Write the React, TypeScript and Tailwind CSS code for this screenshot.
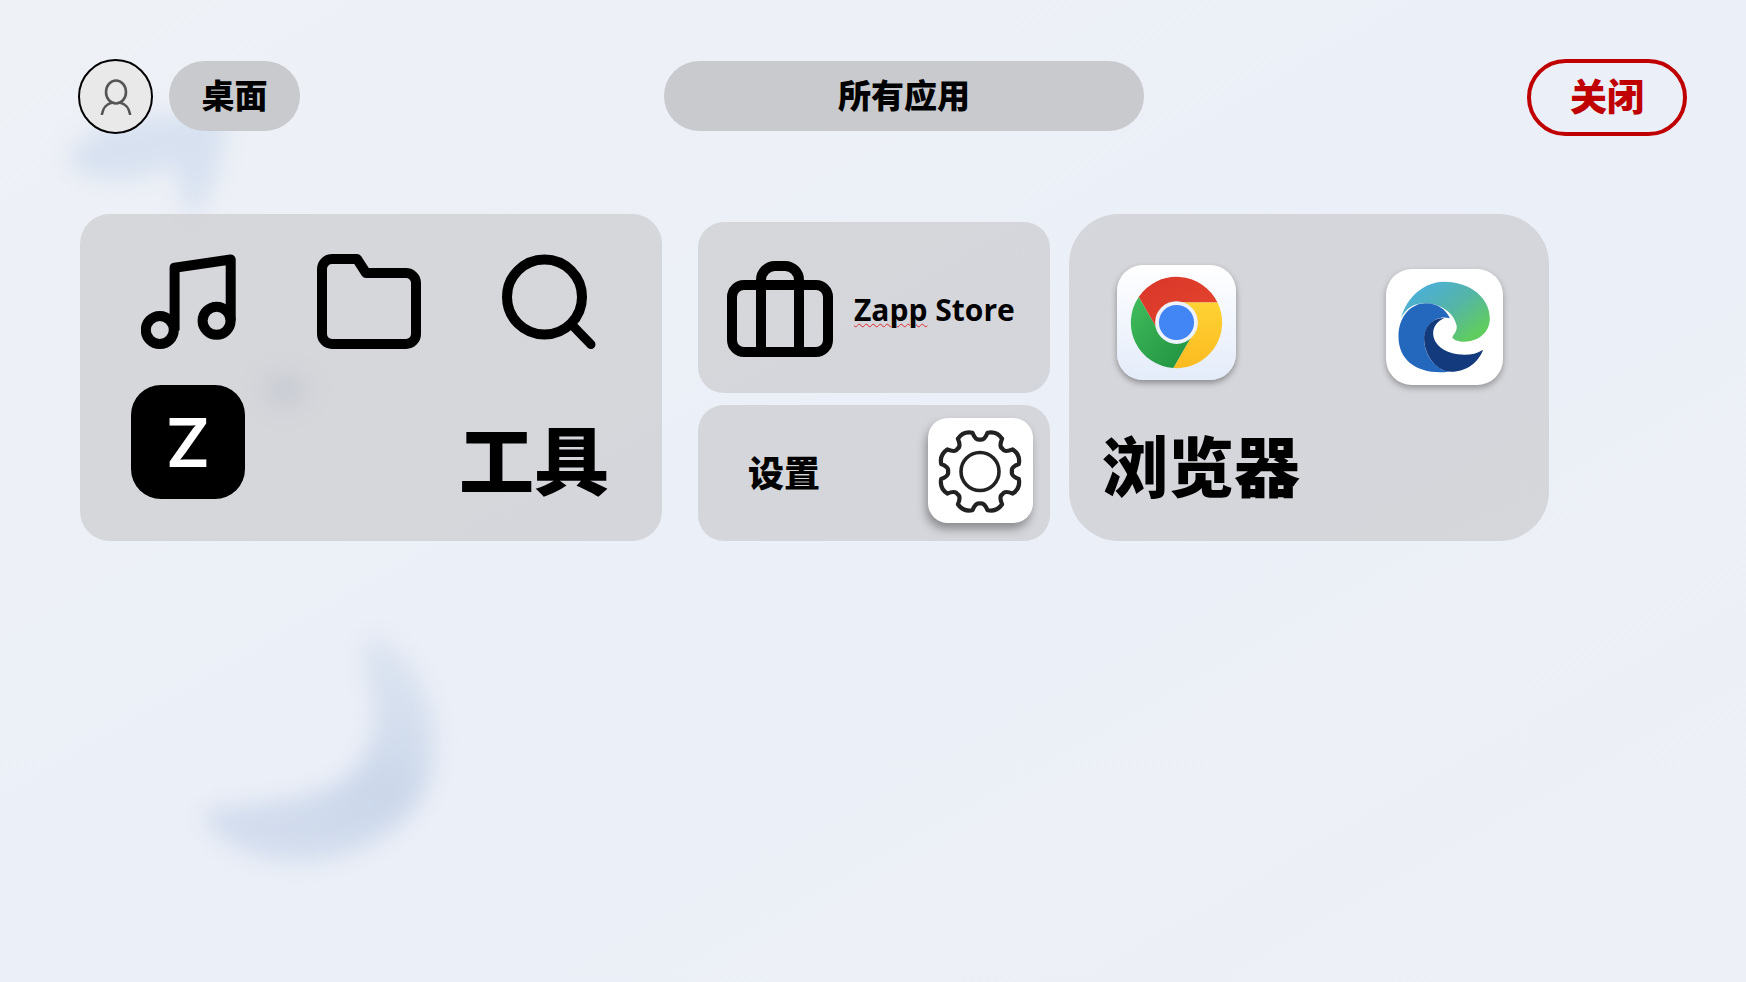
import React from "react";

const CJK = "font-['Noto_Sans_CJK_SC',sans-serif] font-black";

// gear outline: 8 rounded teeth around the centre
const gearPath = (cx: number, cy: number): string => {
  const pt = (deg: number, r: number): string => {
    const a = (deg * Math.PI) / 180;
    return `${(cx + r * Math.sin(a)).toFixed(2)} ${(cy - r * Math.cos(a)).toFixed(2)}`;
  };
  let d = `M${pt(0, 32)}`;
  for (let i = 0; i < 8; i++) {
    const a = i * 45;
    d += ` Q${pt(a + 8, 31)} ${pt(a + 11, 39.5)}`;
    d += ` Q${pt(a + 22.5, 44)} ${pt(a + 34, 39.5)}`;
    d += ` Q${pt(a + 37, 31)} ${pt(a + 45, 32)}`;
  }
  return d + " Z";
};

const Backdrop = (): JSX.Element => (
  <svg className="absolute inset-0 h-full w-full" viewBox="0 0 1746 982">
    <defs>
      <linearGradient id="crescent" x1="0.8" y1="0" x2="0.4" y2="1">
        <stop offset="0" stopColor="#dde5f1" />
        <stop offset="0.6" stopColor="#cbd7ea" />
        <stop offset="1" stopColor="#d3ddee" />
      </linearGradient>
    </defs>
    <g className="blur-[11px]">
      <path
        d="M375 636C428 660 447 740 424 792C397 846 320 872 262 856C232 848 208 832 204 812C240 803 290 806 330 788C373 768 383 720 370 685C363 665 358 648 375 636Z"
        fill="url(#crescent)"
      />
      <path
        d="M68 165C80 128 120 118 165 116L226 110C226 160 210 195 192 218C180 205 182 178 174 165C140 182 98 184 68 165Z"
        fill="#d7e1f0"
      />
      <ellipse cx="285" cy="390" rx="22" ry="18" fill="#c3cede" />
    </g>
  </svg>
);

const UserIcon = (): JSX.Element => (
  <svg width="32" height="36" viewBox="0 0 32 36" fill="none" stroke="#555" strokeWidth="2.6" strokeLinecap="round">
    <ellipse cx="16" cy="13" rx="10" ry="11.5" />
    <path d="M2 35C3 29 7 25 11 24M30 35C29 29 25 25 21 24" />
  </svg>
);

const MusicIcon = (): JSX.Element => (
  <svg width="95" height="95" viewBox="0 0 95 95" fill="none" stroke="#000" strokeWidth="10" strokeLinejoin="round">
    <path d="M33.6 76.5V13.7L89.7 5.5V66.8" />
    <circle cx="18.8" cy="76" r="14" />
    <circle cx="75.6" cy="66.8" r="14" />
  </svg>
);

const FolderIcon = (): JSX.Element => (
  <svg width="104" height="95" viewBox="0 0 104 95" fill="none" stroke="#000" strokeWidth="10" strokeLinejoin="round">
    <path d="M15 90H89a10 10 0 0 0 10-10V29a10 10 0 0 0-10-10H49L40 5H15a10 10 0 0 0-10 10V80a10 10 0 0 0 10 10Z" />
  </svg>
);

const SearchIcon = (): JSX.Element => (
  <svg width="95" height="95" viewBox="0 0 95 95" fill="none" stroke="#000" strokeWidth="10" strokeLinecap="round">
    <circle cx="42.5" cy="43" r="37.5" />
    <path d="M72 73L89 90.5" strokeWidth="9" />
  </svg>
);

const BriefcaseIcon = (): JSX.Element => (
  <svg width="106" height="96" viewBox="0 0 106 96" fill="none" stroke="#000" strokeWidth="10">
    <rect x="5" y="24" width="96" height="67" rx="12" />
    <path d="M34 91V19a14 14 0 0 1 14-14h10a14 14 0 0 1 14 14V91" />
  </svg>
);

const GearIcon = (): JSX.Element => (
  <svg width="105" height="105" viewBox="0 0 105 105" fill="none" stroke="#222" strokeWidth="4.2" strokeLinejoin="round">
    <path d={gearPath(52, 53.5)} />
    <circle cx="52" cy="53.5" r="19" strokeWidth="3.6" />
  </svg>
);

const ChromeLogo = (): JSX.Element => (
  <svg width="99" height="95" viewBox="0 0 100 100">
    <defs>
      <linearGradient id="chromeRed" x1="0" y1="0" x2="1" y2="1">
        <stop offset="0" stopColor="#d8362a" />
        <stop offset="1" stopColor="#e8472d" />
      </linearGradient>
      <linearGradient id="chromeYellow" x1="0.5" y1="0" x2="0.5" y2="1">
        <stop offset="0" stopColor="#ffd233" />
        <stop offset="1" stopColor="#fbbb21" />
      </linearGradient>
      <linearGradient id="chromeGreen" x1="0" y1="0" x2="1" y2="1">
        <stop offset="0" stopColor="#40bd5c" />
        <stop offset="1" stopColor="#1f8f3f" />
      </linearGradient>
    </defs>
    <path d="M93.2 29A48 48 0 0 0 10.2 23.1L31.8 60.5L50 29Z" fill="url(#chromeRed)" />
    <path d="M46.6 97.9A48 48 0 0 0 93.2 29H50L68.2 60.5Z" fill="url(#chromeYellow)" />
    <path d="M10.2 23.1A48 48 0 0 0 46.6 97.9L68.2 60.5L31.8 60.5Z" fill="url(#chromeGreen)" />
    <circle cx="50" cy="50" r="22.5" fill="#eef2fa" />
    <circle cx="50" cy="50" r="18.5" fill="#4285f4" />
  </svg>
);

const EdgeLogo = (): JSX.Element => (
  <svg width="117" height="116" viewBox="52 42 348 348">
    <defs>
      <linearGradient id="edgeTop" x1="0.1" y1="0.1" x2="0.9" y2="0.8">
        <stop offset="0" stopColor="#4aaedf" />
        <stop offset="0.55" stopColor="#55b5a6" />
        <stop offset="1" stopColor="#5fcc60" />
      </linearGradient>
    </defs>
    <path
      d="M95 190C115 120 170 80 225 80C305 80 362 130 362 190C362 235 325 260 285 260C265 260 248 252 250 245C258 232 265 225 262 210C250 165 205 145 165 145C135 145 110 160 95 190Z"
      fill="url(#edgeTop)"
    />
    <path
      d="M88 245C88 185 125 145 170 145C205 145 232 165 242 190C205 178 165 205 165 255C165 300 200 345 240 350C150 360 88 320 88 245Z"
      fill="#2468bd"
    />
    <path
      d="M225 190C190 186 163 218 165 255C167 305 205 350 245 350C295 350 328 320 342 284C320 298 295 302 265 298C225 292 192 268 192 235C192 215 205 198 225 190Z"
      fill="#123a7c"
    />
  </svg>
);

const ToolsCard = (): JSX.Element => (
  <div className="flex h-[327px] w-[582px] flex-col rounded-[30px] bg-[#cccccf]/70 pt-[40px]">
    <div className="flex pl-[61px]">
      <MusicIcon />
      <div className="ml-[81px]">
        <FolderIcon />
      </div>
      <div className="ml-[81px]">
        <SearchIcon />
      </div>
    </div>
    <div className="mt-[36px] flex items-end justify-between pl-[51px] pr-[53px]">
      <div className="flex h-[114px] w-[114px] items-center justify-center rounded-[30px] bg-black">
        <span className="font-['Inter',sans-serif] text-[68px] font-semibold leading-none text-white">Z</span>
      </div>
      <span className={`${CJK} text-[75px] leading-[84px] text-black`}>工具</span>
    </div>
  </div>
);

const MiddleColumn = (): JSX.Element => (
  <div className="mt-[8px] flex w-[352px] flex-col gap-[12px]">
    <div className="flex h-[171px] items-center rounded-[26px] bg-[#cccccf]/70 pl-[29px] pt-[3px]">
      <BriefcaseIcon />
      <span className="ml-[21px] mt-[2px] font-['Open_Sans',sans-serif] text-[30px] font-bold leading-none text-black">
        <span className="underline decoration-[#e0262b] decoration-wavy decoration-1 underline-offset-2">Zapp</span> Store
      </span>
    </div>
    <div className="flex h-[136px] items-center justify-between rounded-[26px] bg-[#cccccf]/70 pb-[5px] pl-[50px] pr-[17px]">
      <span className={`${CJK} text-[36px] leading-none text-black`}>设置</span>
      <div className="h-[105px] w-[105px] rounded-[20px] bg-white shadow-[-2px_6px_10px_rgba(0,0,0,0.35)]">
        <GearIcon />
      </div>
    </div>
  </div>
);

const BrowserCard = (): JSX.Element => (
  <div className="flex h-[327px] w-[480px] flex-col rounded-[50px] bg-[#cccccf]/70 pl-[33px] pt-[51px]">
    <div className="flex items-start">
      <div className="ml-[15px] flex h-[115px] w-[119px] items-center justify-center rounded-[26px] bg-gradient-to-b from-white to-[#e4ecfa] shadow-[0_3px_6px_rgba(0,0,0,0.35)]">
        <ChromeLogo />
      </div>
      <div className="ml-[150px] mt-[4px] h-[116px] w-[117px] rounded-[26px] bg-white shadow-[0_3px_6px_rgba(0,0,0,0.3)]">
        <EdgeLogo />
      </div>
    </div>
    <span className={`${CJK} mt-[36px] text-[66px] leading-[84px] text-black`}>浏览器</span>
  </div>
);

export default function App(): JSX.Element {
  return (
    <div className="relative h-[982px] w-[1746px] overflow-hidden bg-gradient-to-br from-[#eef1f6] via-[#ebeff7] to-[#edf0f6]">
      <Backdrop />
      <div className="relative flex flex-col pt-[59px]">
        {/** Top bar */}
        <div className="flex h-[77px] items-start pl-[78px] pr-[59px]">
          <div className="flex h-[75px] w-[75px] items-center justify-center rounded-full border-2 border-black bg-[#e9e9e9]">
            <UserIcon />
          </div>
          <div className={`${CJK} ml-[16px] mt-[2px] flex h-[70px] w-[131px] items-center justify-center rounded-full bg-[#c8cacd] pb-[3px] text-[33px] text-black`}>
            桌面
          </div>
          <div className={`${CJK} ml-[364px] mt-[2px] flex h-[70px] w-[480px] items-center justify-center rounded-full bg-[#c8cacd] pb-[3px] text-[33px] text-black`}>
            所有应用
          </div>
          <div className={`${CJK} ml-auto flex h-[77px] w-[160px] items-center justify-center rounded-full border-[4.5px] border-[#c00000] pb-[3px] text-[37px] text-[#c00000]`}>
            关闭
          </div>
        </div>

        {/** App groups */}
        <div className="mt-[78px] flex items-start pl-[80px]">
          <ToolsCard />
          <div className="ml-[36px]">
            <MiddleColumn />
          </div>
          <div className="ml-[19px]">
            <BrowserCard />
          </div>
        </div>
      </div>
    </div>
  );
}
